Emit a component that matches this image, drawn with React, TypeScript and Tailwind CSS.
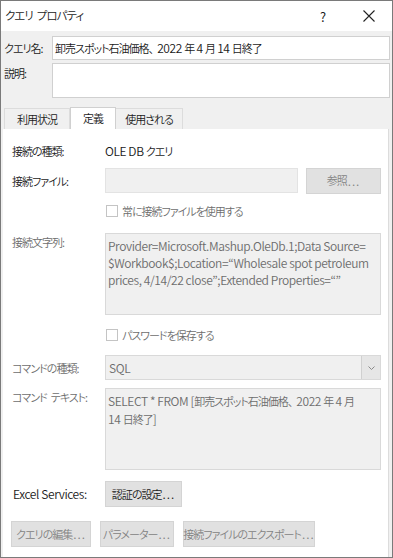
import React from "react";

const font = "font-['Noto_Sans_CJK_JP',sans-serif] [font-feature-settings:'palt'] font-[350]";

// Japanese runs are set narrower, like the dialog's UI font
const J = ({ children }: { children: React.ReactNode }) => (
  <span className="text-[11px] tracking-[-1px]">{children}</span>
);
const L = ({ children }: { children: React.ReactNode }) => (
  <span className="text-[12px] tracking-[-0.4px]">{children}</span>
);
const Gap = () => <span className="inline-block w-[4px]" />;
const Dots = () => <span className="text-[12px] tracking-[1px] ml-[1px]">...</span>;

const Checkbox = ({ label }: { label: string }) => (
  <div className="flex items-center gap-[4px] text-[#6d6d6d]">
    <span className="w-[12px] h-[12px] border border-[#c4c4c4] bg-white" />
    <J>{label}</J>
  </div>
);

const Button = ({ label, enabled = false, width }: { label: string; enabled?: boolean; width: string }) => (
  <div
    className={`${width} h-[26px] flex items-center justify-center whitespace-nowrap bg-[#e1e1e1] border border-[#d4d4d4] ${
      enabled ? "text-[#1a1a1a]" : "text-[#838383]"
    }`}
  >
    <J>{label}</J>
    <Dots />
  </div>
);

const App = () => {
  return (
    <div className={`w-[393px] h-[558px] border border-[#7a7a7a] flex flex-col text-[12px] leading-none text-[#1a1a1a] ${font}`}>
      {/* title bar */}
      <div className="h-[30px] bg-white flex items-center pl-[4px] shrink-0">
        <span className="flex-1 text-[11.5px] tracking-[-1px]">
          クエリ<Gap />プロパティ
        </span>
        <span className="w-[46px] text-center text-[13px]">?</span>
        <span className="w-[46px] flex justify-center">
          <svg width="12" height="12" viewBox="0 0 12 12" stroke="#222" strokeWidth="1.1">
            <path d="M0.5 0.5 L11.5 11.5 M11.5 0.5 L0.5 11.5" />
          </svg>
        </span>
      </div>

      <div className="flex-1 bg-[#f0f0f0] flex flex-col pt-[5px]">
        <div className="flex items-center pl-[3px] pr-[2px]">
          <span className="w-[48px]"><J>クエリ名:</J></span>
          <div className="flex-1 h-[24px] bg-white border border-[#d0d0d0] flex items-center pl-[2px] whitespace-pre">
            <J>卸売スポット石油価格、</J><Gap /><L>2022 </L><J>年</J><L> 4 </L><J>月</J><L> 14 </L><J>日終了</J>
          </div>
        </div>
        <div className="flex items-start pl-[3px] pr-[2px] mt-[3px]">
          <span className="w-[48px] pt-[4px]"><J>説明:</J></span>
          <div className="flex-1 h-[35px] bg-white border border-[#d0d0d0]" />
        </div>

        {/* tabs */}
        <div className="flex mt-[9px] pl-[3px] h-[22px] items-end">
          <div className="w-[66px] h-[21px] flex items-center justify-center border border-b-0 border-[#dcdcdc]"><J>利用状況</J></div>
          <div className="w-[46px] h-[22px] flex items-center justify-center bg-white border border-b-0 border-[#d0d0d0]"><J>定義</J></div>
          <div className="w-[67px] h-[21px] flex items-center justify-center border border-l-0 border-b-0 border-[#dcdcdc]"><J>使用される</J></div>
        </div>

        <div className="flex-1 bg-white ml-[2px] mr-[3px] border-r border-[#dcdcdc] flex flex-col pl-[9px] pr-[7px] pt-[11px]">
          <div className="flex items-center h-[22px]">
            <span className="w-[93px]"><J>接続の種類:</J></span>
            <span className="whitespace-pre"><L>OLE DB </L><J>クエリ</J></span>
          </div>

          <div className="flex items-center h-[27px] mt-[5px]">
            <span className="w-[93px]"><J>接続ファイル:</J></span>
            <div className="w-[193px] h-[25px] bg-[#f0f0f0] border border-[#e3e3e3]" />
            <div className="ml-auto">
              <Button label="参照" width="w-[75px]" />
            </div>
          </div>

          <div className="flex items-center h-[14px] mt-[10px] pl-[94px]">
            <Checkbox label="常に接続ファイルを使用する" />
          </div>

          <div className="flex items-start mt-[15px]">
            <span className="w-[93px] pt-[3px] text-[#6d6d6d]"><J>接続文字列:</J></span>
            <div className="flex-1 h-[82px] bg-[#f0f0f0] border border-[#d9d9d9] px-[2px] pt-[3px] leading-[17px] text-[#6d6d6d] whitespace-nowrap">
              <div><L>Provider=Microsoft.Mashup.OleDb.1;Data Source=</L></div>
              <div><L>$Workbook$;Location=“Wholesale spot petroleum</L></div>
              <div><L>prices, 4/14/22 close”;Extended Properties=“”</L></div>
            </div>
          </div>

          <div className="flex items-center h-[14px] mt-[13px] pl-[94px]">
            <Checkbox label="パスワードを保存する" />
          </div>

          <div className="flex items-center mt-[13px]">
            <span className="w-[93px] text-[#6d6d6d]"><J>コマンドの種類:</J></span>
            <div className="flex-1 h-[25px] bg-[#f0f0f0] border border-[#d9d9d9] flex items-center">
              <span className="flex-1 pl-[3px] text-[#6d6d6d]"><L>SQL</L></span>
              <div className="w-[19px] h-[23px] bg-[#e6e6e6] border-l border-[#d0d0d0] flex items-center justify-center">
                <svg width="7" height="4" viewBox="0 0 7 4" fill="none" stroke="#8a8a8a" strokeWidth="1">
                  <path d="M0.5 0.5 L3.5 3.5 L6.5 0.5" />
                </svg>
              </div>
            </div>
          </div>

          <div className="flex items-start mt-[8px]">
            <span className="w-[93px] pt-[3px] text-[#6d6d6d]"><J>コマンド<Gap />テキスト:</J></span>
            <div className="flex-1 h-[82px] bg-[#f0f0f0] border border-[#d9d9d9] px-[2px] pt-[3px] leading-[17px] text-[#6d6d6d] whitespace-pre">
              <div><L>SELECT * FROM [</L><J>卸売スポット石油価格、</J><Gap /><L>2022 </L><J>年</J><L> 4 </L><J>月</J></div>
              <div><L>14 </L><J>日終了</J><L>]</L></div>
            </div>
          </div>

          <div className="flex items-center mt-[11px]">
            <span className="w-[93px] pl-[1px]"><L>Excel Services:</L></span>
            <Button label="認証の設定" enabled width="w-[77px]" />
          </div>

          <div className="flex items-center mt-[14px] gap-[9px] -ml-[1px]">
            <Button label="クエリの編集" width="w-[80px]" />
            <Button label="パラメーター" width="w-[74px]" />
            <Button label="接続ファイルのエクスポート" width="w-[132px]" />
          </div>
        </div>
      </div>
    </div>
  );
};

export default App;
